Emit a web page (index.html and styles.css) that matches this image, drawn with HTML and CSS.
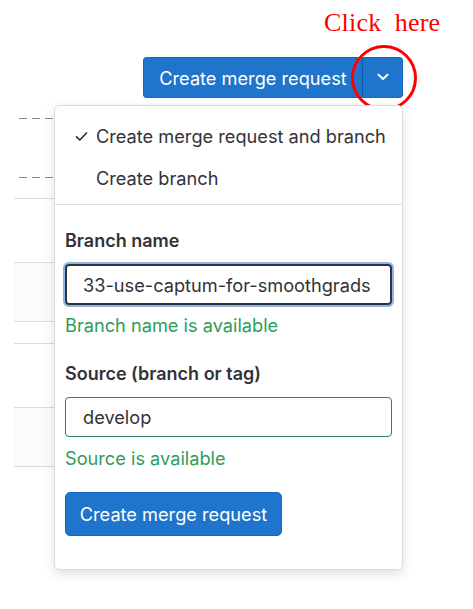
FILE: index.html
```html
<!DOCTYPE html>
<html>
<head>
<meta charset="utf-8">
<link rel="stylesheet" href="styles.css">
</head>
<body>
<div class="page">
  <div class="annot">Click&nbsp; here</div>
  <div class="circle"></div>
  <div class="toolbar">
    <div class="split">
      <button class="split-main">Create merge request</button>
      <button class="split-caret">
        <svg width="12" height="8" viewBox="0 0 12 8"><path d="M1.5 1.8L6 6l4.5-4.2" fill="none" stroke="#fff" stroke-width="2" stroke-linecap="round" stroke-linejoin="round"/></svg>
      </button>
    </div>
  </div>
  <div class="rows">
    <div class="row dashed r1"></div>
    <div class="row dashed r2"></div>
    <div class="row solid r3"></div>
    <div class="row solid shade r4"></div>
    <div class="row solid r5"></div>
    <div class="row solid r6"></div>
    <div class="row solid shade r7"></div>
  </div>

  <div class="menu">
    <ul class="items">
      <li class="item"><span class="check"><svg width="13" height="11" viewBox="0 0 13 11"><path d="M1.5 5.8l3.3 3.2L11.5 2" fill="none" stroke="#333238" stroke-width="1.7" stroke-linecap="round" stroke-linejoin="round"/></svg></span>Create merge request and branch</li>
      <li class="item"><span class="check"></span>Create branch</li>
    </ul>
    <div class="divider"></div>
    <form class="form">
      <label class="label">Branch name</label>
      <div class="input focus">33-use-captum-for-smoothgrads</div>
      <div class="help">Branch name is available</div>
      <label class="label second">Source (branch or tag)</label>
      <div class="input valid">develop</div>
      <div class="help help2">Source is available</div>
      <button type="button" class="submit">Create merge request</button>
    </form>
  </div>
</div>
</body>
</html>
```

FILE: styles.css
```css
* { box-sizing: border-box; }
html, body { margin: 0; padding: 0; background: #fff; }
body { font-family: Inter, "Noto Sans", "Liberation Sans", sans-serif; color: #333238; }
.page { position: relative; width: 473px; height: 609px; overflow: hidden; }

.annot {
  position: absolute; left: 324px; top: 8px;
  font-family: "Liberation Serif", "DejaVu Serif", serif;
  font-size: 26px; color: #f00; letter-spacing: 0.2px;
}
.circle {
  position: absolute; left: 351px; top: 45px; width: 66px; height: 66px;
  border: 3px solid #f00; border-radius: 50%;
}

.toolbar { display: flex; justify-content: flex-end; padding: 57px 70px 0 0; }
.split { display: flex; height: 41px; }
.split button {
  font-family: inherit; color: #fff; background: #1f75cb; border: 1px solid #1068bf;
  font-size: 18.2px; cursor: pointer;
}
.split-main { width: 220px; padding: 0; border-radius: 4px 0 0 4px; border-right-color: #0d5ba8 !important; }
.split-caret { width: 40px; border-radius: 0 4px 4px 0; display: flex; align-items: center; justify-content: center; border-left: 0 !important; padding: 0 0 2px 0; }

.rows { margin-left: 14px; width: 200px; display: flex; flex-direction: column; }
.row { border-top: 1px solid #dcdcde; }
.row.dashed {
  border-top: 0;
  background-image: repeating-linear-gradient(90deg, transparent 0px, transparent 5px, #8a8a8a 5px, #8a8a8a 13px);
  background-size: 100% 1px;
  background-repeat: no-repeat;
}
.row.shade { background: #fbfafd; }
.r1 { margin-top: 20px; height: 59px; }
.r2 { height: 21px; }
.r3 { height: 64px; }
.r4 { height: 59px; }
.r5 { height: 22px; }
.r6 { height: 64px; }
.r7 { height: 60px; border-bottom: 1px solid #dcdcde; }

.menu {
  position: absolute; left: 54px; top: 105px; width: 349px; height: 465px;
  background: #fff; border: 1px solid #dcdcde; border-radius: 5px;
  box-shadow: 0 4px 12px rgba(0,0,0,0.12);
}
.items { list-style: none; margin: 0; padding: 9px 0 5px; }
.item { display: flex; align-items: center; height: 42px; padding-left: 20px; font-size: 18.2px; color: #333238; }
.check { width: 21px; display: flex; align-items: center; }
.divider { border-top: 1px solid #dcdcde; }
.form { padding: 26px 11px 0 10px; display: flex; flex-direction: column; align-items: flex-start; }
.label { font-weight: 600; font-size: 18px; line-height: 20px; margin-bottom: 13px; }
.label.second { margin-top: 29px; }
.input {
  width: 327px; height: 41px; border-radius: 4px; padding: 0 14px 0 16px;
  font-size: 18.2px; display: flex; align-items: center; color: #333238; white-space: nowrap;
}
.input.focus { border: 2px solid #333238; box-shadow: 0 0 0 2px #89b6e6; }
.input.valid { border: 1px solid #2f8359; height: 40px; padding-left: 17px; }
.help { color: #2e9d5a; font-size: 18.2px; line-height: 20px; margin-top: 10px; }
.help.help2 { margin-top: 11px; }
.submit {
  margin-top: 24px; height: 44px; width: 217px; padding: 0;
  background: #1f75cb; border: 1px solid #1068bf; border-radius: 5px;
  color: #fff; font-family: inherit; font-size: 18.2px;
}
```
